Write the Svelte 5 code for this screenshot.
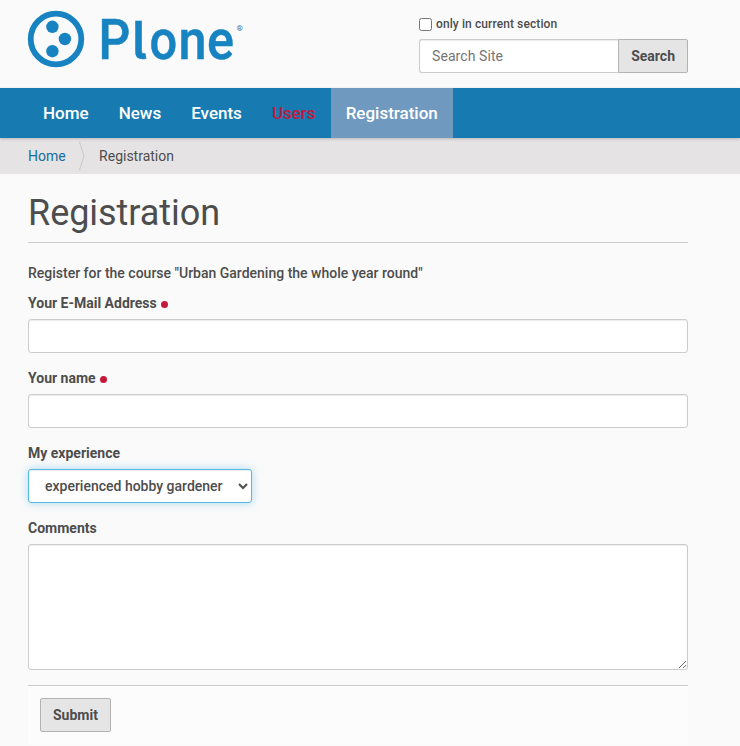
<script>
  const nav = [
    { label: 'Home' },
    { label: 'News' },
    { label: 'Events' },
    { label: 'Users', kind: 'users' },
    { label: 'Registration', kind: 'active' }
  ];
  let experience = $state('experienced hobby gardener');
</script>

<div class="page">
  <header>
    <svg class="logo" width="220" height="64" viewBox="0 0 220 64" role="img" aria-label="Plone">
      <circle cx="28" cy="31" r="25.3" fill="none" stroke="#1783c1" stroke-width="5.8" />
      <circle cx="24.4" cy="18.8" r="6.2" />
      <circle cx="36.9" cy="31" r="6.2" />
      <circle cx="24.4" cy="43.2" r="6.2" />
      <g class="word">
        <text transform="translate(70.6 50.5) scale(.89 1)">P</text>
        <text class="tail" transform="translate(104.2 50.5) scale(.92 1)">l</text>
        <text transform="translate(121.6 50.5) scale(.87 1)">o</text>
        <text transform="translate(150.6 50.5) scale(.9 1)">n</text>
        <text transform="translate(178.9 50.5) scale(.9 1)">e</text>
      </g>
      <text class="mark" x="208.6" y="22.5">®</text>
    </svg>
    <form class="search" onsubmit={(e) => e.preventDefault()}>
      <label class="section"><input type="checkbox" />only in current section</label>
      <div class="searchrow">
        <input class="field" type="text" placeholder="Search Site" />
        <button class="btn">Search</button>
      </div>
    </form>
  </header>

  <nav>
    {#each nav as item}
      <a class={item.kind} href="#top">{item.label}</a>
    {/each}
  </nav>

  <div class="crumbs">
    <a href="#top">Home</a>
    <svg width="6" height="28" viewBox="0 0 6 28"><path d="M.5 0L5 14L.5 28" fill="none" stroke="#c8c8c8" /></svg>
    <span>Registration</span>
  </div>

  <main>
    <h1>Registration</h1>
    <form onsubmit={(e) => e.preventDefault()}>
      <p>Register for the course "Urban Gardening the whole year round"</p>
      <div class="group">
        <label for="email">Your E-Mail Address<i></i></label>
        <input id="email" class="field" type="text" />
      </div>
      <div class="group">
        <label for="name">Your name<i></i></label>
        <input id="name" class="field" type="text" />
      </div>
      <div class="group">
        <label for="exp">My experience</label>
        <select id="exp" class="field" bind:value={experience}>
          <option>experienced hobby gardener</option>
        </select>
      </div>
      <div class="group">
        <label for="comments">Comments</label>
        <textarea id="comments" class="field"></textarea>
      </div>
      <div class="controls"><button class="btn">Submit</button></div>
    </form>
  </main>
</div>

<style>
  :global(body) { background: #fafafa; }
  .page {
    height: 746px;
    overflow: hidden;
    background: #fafafa;
    color: #4d4d4d;
    font: 400 14px/20px Roboto, sans-serif;
  }
  .page, .page * { box-sizing: border-box; }
  header {
    height: 88px;
    padding: 8px 52px 0 28px;
    display: flex;
    justify-content: space-between;
  }
  .logo { fill: #1783c1; display: block; overflow: visible; }
  .word { font: 500 56px Roboto, sans-serif; stroke: #1783c1; stroke-width: 0.5; }
  .tail { font: 600 52.5px Inter, sans-serif; font-feature-settings: "cv05", "ss02"; }
  .mark { font: 700 8px Roboto, sans-serif; }
  .search { width: 269px; padding-top: 6px; }
  .section {
    display: flex;
    align-items: center;
    height: 20px;
    margin-bottom: 5px;
    font-size: 12px;
    font-weight: 500;
    letter-spacing: 0.1px;
  }
  .section input { width: 13px; height: 13px; margin: 1px 4px 0 0; }
  .searchrow { display: flex; }
  .searchrow .field { flex: 1; min-width: 0; border-radius: 3px 0 0 3px; border-right: 0; }
  .searchrow .btn { border-radius: 0 2px 2px 0; }
  .field {
    display: block;
    width: 100%;
    height: 34px;
    padding: 6px 12px;
    margin: 0;
    border: 1px solid #ccc;
    border-radius: 3px;
    background: #fff;
    color: #4d4d4d;
    font: 500 14px/20px Roboto, sans-serif;
    box-shadow: inset 0 1px 1px rgba(0, 0, 0, 0.075);
    outline: none;
  }
  .searchrow .field { font-weight: 400; letter-spacing: 0.08px; }
  .field::placeholder { color: #757575; }
  .btn {
    height: 34px;
    padding: 6px 12px;
    border: 1px solid #b3b3b3;
    border-radius: 2px;
    background: #e5e5e5;
    color: #4d4d4d;
    font: 700 14px/20px Roboto, sans-serif;
  }
  nav {
    position: relative;
    display: flex;
    height: 50px;
    padding-left: 28px;
    background: #177bb2;
    box-shadow: 0 1px 3px rgba(0, 0, 0, 0.2);
  }
  nav a {
    padding: 0 15px;
    color: #fff;
    font-size: 17px;
    font-weight: 500;
    line-height: 50px;
    text-decoration: none;
  }
  nav .users { color: #c4183c; }
  nav .active { background: #7099bf; }
  .crumbs {
    display: flex;
    align-items: center;
    height: 36px;
    padding-left: 28px;
    background: #e5e3e4;
  }
  .crumbs a { color: #146f9f; text-decoration: none; }
  .crumbs svg { margin: 0 14.4px 0 13px; }
  main { padding: 18px 52px 0 28px; }
  h1 {
    height: 51px;
    margin: 0 0 20px;
    padding-top: 1px;
    border-bottom: 1px solid #ccc;
    font-size: 36px;
    font-weight: 400;
    line-height: 40px;
    letter-spacing: -0.04px;
  }
  p { margin: 0 0 10px; font-weight: 500; }
  .group { margin-bottom: 15px; }
  .group label {
    display: flex;
    align-items: center;
    height: 20px;
    margin-bottom: 6px;
    font-weight: 700;
  }
  i { width: 7px; height: 7px; margin: 3px 0 0 4.5px; border-radius: 50%; background: #c4183c; }
  select.field {
    width: 224px;
    border-color: #57b8e5;
    box-shadow: inset 0 1px 1px rgba(0, 0, 0, 0.075), 0 0 8px rgba(87, 184, 229, 0.5);
  }
  textarea.field { height: 126px; }
  .controls {
    height: 60px;
    padding: 12px;
    border-top: 1px solid #ccc;
    background: #fcfcfc;
  }
</style>
